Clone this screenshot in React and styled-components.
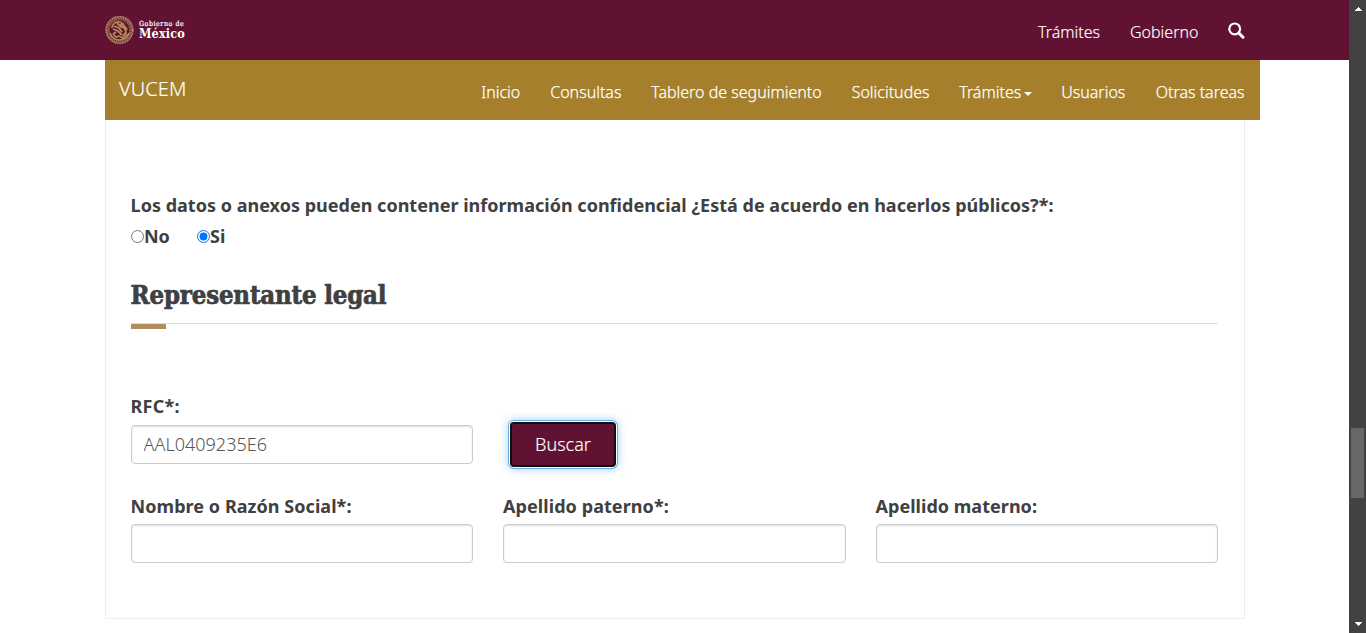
import React from "react";
import styled, { createGlobalStyle } from "styled-components";

const Global = createGlobalStyle`
  * { box-sizing: border-box; }
  html, body { margin: 0; padding: 0; height: 633px; overflow: hidden; background: #fff; }
  body { font-family: "Noto Sans", "Open Sans", sans-serif; color: #404041; }
`;

const Shell = styled.div`
  display: flex;
  width: 1366px;
  height: 633px;
  overflow: hidden;
`;
const Page = styled.div`
  width: 1349px;
  height: 633px;
`;
const Header = styled.header`
  height: 60px;
  background: #611232;
  padding: 0 104px 0 105px;
  display: flex;
  justify-content: space-between;
`;
const Brand = styled.div`
  display: flex;
  align-items: center;
  gap: 5px;
  height: 59px;
`;
const BrandText = styled.div`
  color: #fff;
  font-family: "DejaVu Serif Condensed", "DejaVu Serif", serif;
  font-stretch: condensed;
  white-space: nowrap;
`;
const BrandTop = styled.div`
  font-size: 7px;
  line-height: 8px;
  letter-spacing: 0.55px;
  -webkit-text-stroke: 0.2px #fff;
`;
const BrandName = styled.div`
  font-size: 12.5px;
  line-height: 11px;
  font-weight: bold;
  letter-spacing: 0.15px;
`;
const TopLinks = styled.nav`
  display: flex;
  color: #fff;
  padding-top: 21px;
`;
const NavItem = styled.a`
  width: ${(p) => p.$w}px;
  font-size: 16px;
  line-height: 22px;
  font-weight: 300;
  -webkit-text-stroke: ${(p) => p.$stroke || 0.15}px currentColor;
  white-space: nowrap;
  flex: none;
`;
const SearchLink = styled.a`
  width: 17px;
  height: 22px;
  padding-top: 1px;
`;
const SubBar = styled.div`
  width: 1155px;
  height: 60px;
  margin-left: 105px;
  background: #a57f2c;
  color: #fff;
  display: flex;
`;
const SubTitle = styled.div`
  width: 376px;
  padding: 15px 0 0 14px;
  font-size: 20px;
  line-height: 28px;
  font-weight: 300;
  letter-spacing: 0.1px;
  -webkit-text-stroke: 0.15px currentColor;
  white-space: nowrap;
`;
const SubLinks = styled.nav`
  display: flex;
  padding: 21px 0 0 0.2px;
`;
const Caret = styled.span`
  display: inline-block;
  margin-left: 2.5px;
  vertical-align: middle;
  border-top: 4px solid #fff;
  border-left: 4px solid transparent;
  border-right: 4px solid transparent;
`;
const Panel = styled.main`
  width: 1140px;
  height: 499px;
  margin-left: 105px;
  padding: 72px 26px 0 24.6px;
  border: 1px solid #eee;
  border-top: 0;
`;
const Label = styled.label`
  display: block;
  height: 27px;
  font-size: 18px;
  line-height: 27px;
  font-weight: 700;
  white-space: nowrap;
  letter-spacing: ${(p) => p.$ls || 0.015}px;
`;
const Radios = styled.div`
  display: flex;
  margin-top: 4px;
`;
const RadioOption = styled.label`
  display: flex;
  align-items: flex-start;
  width: 66px;
  height: 27px;
  font-size: 18px;
  line-height: 27px;
  font-weight: 700;
`;
const Radio = styled.input`
  width: 13px;
  height: 13px;
  margin: 7px 0.4px 0 0;
`;
const Heading = styled.h3`
  margin: 27px 0 0;
  height: 47px;
  border-bottom: 1px solid #ddd;
  font-family: "DejaVu Serif Condensed", "DejaVu Serif", serif;
  font-stretch: condensed;
  font-size: 25.5px;
  line-height: 36px;
  font-weight: 700;
  letter-spacing: -0.16px;
  -webkit-text-stroke: 0.7px currentColor;
  white-space: nowrap;
`;
const Accent = styled.div`
  width: 35px;
  height: 5px;
  background: #b38e5d;
`;
const SearchRow = styled.div`
  display: flex;
  margin-top: 64px;
`;
const NameRow = styled.div`
  display: flex;
  gap: 30px;
  margin-top: 26px;
`;
const Field = styled.div`
  width: 342.5px;
`;
const Input = styled.input`
  display: block;
  width: 100%;
  height: 39px;
  margin-top: ${(p) => p.$gap}px;
  padding: 0 12px 2px;
  border: 1px solid #ccc;
  border-radius: 4px;
  box-shadow: inset 0 1px 2px rgba(0, 0, 0, 0.12);
  outline: 0;
  background: #fff;
  color: #555;
  font: 300 18px "Noto Sans", sans-serif;
`;
const Button = styled.button`
  width: 106px;
  height: 45px;
  margin: 29px 0 0 36.9px;
  padding: 0 0 2px;
  border: 2px solid #101010;
  border-radius: 4px;
  background: #611232;
  color: #fff;
  font: 300 18px "Noto Sans", sans-serif;
  -webkit-text-stroke: 0.15px currentColor;
  box-shadow: 0 0 0 1px #fff, 0 0 0 2px #66afe9, 0 0 8px 2px rgba(102, 175, 233, 0.6);
`;
const Scrollbar = styled.aside`
  display: flex;
  flex-direction: column;
  align-items: center;
  width: 17px;
  height: 633px;
  padding: 7px 0 7px;
  background: #424242;
`;
const Thumb = styled.div`
  width: 13px;
  height: 70px;
  margin: 417px 0 auto;
  background: #686868;
  flex: none;
`;

function Seal() {
  return (
    <svg width="29" height="30" viewBox="0 0 29 30" fill="none" stroke="#b18b5b">
      <circle cx="14.5" cy="15" r="13.3" strokeWidth="1.6" strokeDasharray="2.2 .5" />
      <circle cx="14.5" cy="15" r="11.2" strokeWidth="2.8" strokeDasharray="1.3 .5" opacity=".7" />
      <path d="M7 13c0-4 4-7 8-6l3 2-3 1c3 0 6 2 7 5M9 11l5 2 3 4M8 14l5 2 4 4M12 8l4 4 4 1M19 12l2 5-3 4M11 17l-3 2" strokeWidth="1.8" />
      <path d="M5 18c2 5 6 7 9.5 7s8-2 9.5-7M8 19l3 3 3-1 4 2 4-4" strokeWidth="1.6" />
    </svg>
  );
}

function SearchIcon() {
  return (
    <svg width="17" height="17" viewBox="0 0 17 17" fill="none" stroke="#fff">
      <circle cx="6.7" cy="6.9" r="5.4" strokeWidth="2.2" />
      <path d="M10.7 10.9L15 15.2" strokeWidth="3" strokeLinecap="round" />
    </svg>
  );
}

function Arrow({ down }) {
  return (
    <svg width="8" height="4" viewBox="0 0 8 4" fill="#fff" shapeRendering="crispEdges">
      <path d={down ? "M0 0H8L4 4Z" : "M0 4H8L4 0Z"} />
    </svg>
  );
}

export default function App() {
  return (
    <Shell>
      <Global />
      <Page>
        <Header>
          <Brand>
            <Seal />
            <BrandText>
              <BrandTop>Gobierno de</BrandTop>
              <BrandName>México</BrandName>
            </BrandText>
          </Brand>
          <TopLinks>
            <NavItem $w={92}>Trámites</NavItem>
            <NavItem $w={98}>Gobierno</NavItem>
            <SearchLink aria-label="Buscar"><SearchIcon /></SearchLink>
          </TopLinks>
        </Header>
        <SubBar>
          <SubTitle>VUCEM</SubTitle>
          <SubLinks>
            <NavItem $stroke={0.25} $w={69}>Inicio</NavItem>
            <NavItem $stroke={0.25} $w={101}>Consultas</NavItem>
            <NavItem $stroke={0.25} $w={200.5}>Tablero de seguimiento</NavItem>
            <NavItem $stroke={0.25} $w={107.5}>Solicitudes</NavItem>
            <NavItem $stroke={0.25} $w={102}>Trámites<Caret /></NavItem>
            <NavItem $stroke={0.25} $w={94.5}>Usuarios</NavItem>
            <NavItem $stroke={0.25} $w={90}>Otras tareas</NavItem>
          </SubLinks>
        </SubBar>
        <Panel>
          <Label>Los datos o anexos pueden contener información confidencial ¿Está de acuerdo en hacerlos públicos?*:</Label>
          <Radios>
            <RadioOption><Radio type="radio" name="publicos" />No</RadioOption>
            <RadioOption><Radio type="radio" name="publicos" defaultChecked />Si</RadioOption>
          </Radios>
          <Heading>Representante legal</Heading>
          <Accent />
          <SearchRow>
            <Field>
              <Label $ls={0.2}>RFC*:</Label>
              <Input $gap={5} defaultValue="AAL0409235E6" />
            </Field>
            <Button>Buscar</Button>
          </SearchRow>
          <NameRow>
            <Field><Label $ls={0.05}>Nombre o Razón Social*:</Label><Input $gap={4} /></Field>
            <Field><Label $ls={0.07}>Apellido paterno*:</Label><Input $gap={4} /></Field>
            <Field><Label $ls={0.03}>Apellido materno:</Label><Input $gap={4} /></Field>
          </NameRow>
        </Panel>
      </Page>
      <Scrollbar>
        <Arrow />
        <Thumb />
        <Arrow down />
      </Scrollbar>
    </Shell>
  );
}
